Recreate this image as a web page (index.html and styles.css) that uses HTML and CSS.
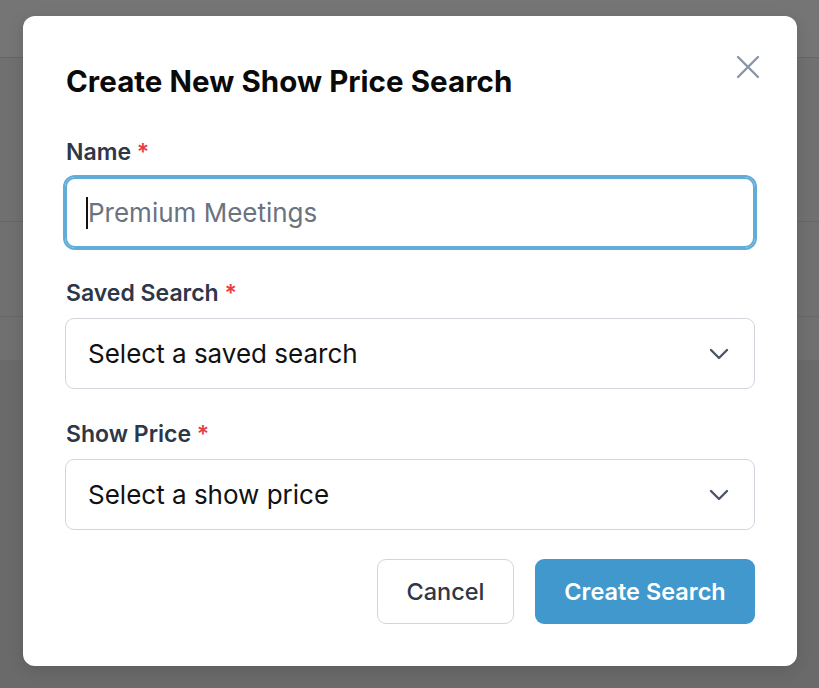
FILE: index.html
```html
<!DOCTYPE html>
<html lang="en">
<head>
<meta charset="utf-8">
<title>Create New Show Price Search</title>
<link rel="stylesheet" href="styles.css">
</head>
<body>
<div class="page">
  <div class="bg-header"></div>
  <div class="bg-row bg-row-1"></div>
  <div class="bg-row bg-row-2"></div>
  <div class="bg-row bg-row-3"></div>
  <div class="bg-rest"></div>
</div>
<div class="overlay">
  <div class="modal">
    <button class="close" aria-label="Close">
      <svg width="24" height="24" viewBox="0 0 24 24" fill="none" stroke="currentColor" stroke-width="2.4" stroke-linecap="round"><path d="M2 2 L22 22 M22 2 L2 22"/></svg>
    </button>
    <h2 class="title">Create New Show Price Search</h2>
    <div class="field">
      <label class="label">Name <span class="req">*</span></label>
      <div class="input focused"><span class="caret"></span><span class="placeholder">Premium Meetings</span></div>
    </div>
    <div class="field">
      <label class="label">Saved Search <span class="req">*</span></label>
      <div class="input select"><span class="value">Select a saved search</span>
        <svg class="chev" width="20" height="12" viewBox="0 0 20 12" fill="none" stroke="currentColor" stroke-width="2.4" stroke-linecap="round" stroke-linejoin="round"><path d="M2 2 L10 10 L18 2"/></svg>
      </div>
    </div>
    <div class="field field-last">
      <label class="label">Show Price <span class="req">*</span></label>
      <div class="input select"><span class="value">Select a show price</span>
        <svg class="chev" width="20" height="12" viewBox="0 0 20 12" fill="none" stroke="currentColor" stroke-width="2.4" stroke-linecap="round" stroke-linejoin="round"><path d="M2 2 L10 10 L18 2"/></svg>
      </div>
    </div>
    <div class="actions">
      <button class="btn btn-cancel">Cancel</button>
      <button class="btn btn-primary">Create Search</button>
    </div>
  </div>
</div>
</body>
</html>
```
FILE: styles.css
```css
* { box-sizing: border-box; }
html, body { margin: 0; padding: 0; }
body {
  width: 819px;
  height: 688px;
  overflow: hidden;
  font-family: Inter, "Noto Sans", "Liberation Sans", sans-serif;
  background: #6b6b6b;
  position: relative;
}
.page { display: flex; flex-direction: column; height: 688px; }
.bg-header { height: 58px; background: #757575; border-bottom: 1px solid #666; }
.bg-row { background: #707070; border-bottom: 1px solid #666; }
.bg-row-1 { height: 164px; }
.bg-row-2 { height: 95px; }
.bg-row-3 { height: 43px; border-bottom: none; }
.bg-rest { flex: 1; background: #6a6a6a; }

.overlay {
  position: absolute;
  inset: 0;
  padding: 16px 22px 0 23px;
}
.modal {
  position: relative;
  width: 774px;
  height: 650px;
  background: #fff;
  border-radius: 12px;
  padding: 48px 42px 42px 42px;
  box-shadow: 0 4px 16px rgba(0,0,0,0.12);
}
.close {
  position: absolute;
  top: 39px;
  right: 37px;
  width: 24px;
  height: 24px;
  padding: 0;
  border: none;
  background: none;
  color: #8b95a5;
  display: flex;
}
.title {
  margin: 0 0 41px 1px;
  font-size: 29.5px;
  font-weight: 700;
  color: #0a0a0a;
  line-height: 34px;
  letter-spacing: 0.05px;
}
.field { display: flex; flex-direction: column; margin-bottom: 32px; }
.field-last { margin-bottom: 29px; }
.label {
  font-size: 23px;
  font-weight: 600;
  color: #2d3748;
  line-height: 26px;
  margin: 0 0 12px 1px;
}
.req { color: #e53e3e; }
.input {
  height: 71px;
  border: 1.5px solid #d2d6dc;
  border-radius: 9px;
  display: flex;
  align-items: center;
  padding: 0 25px 0 22px;
  font-size: 26px;
}
.focused {
  border: 2px solid #62acd8;
  box-shadow: 0 0 0 2px #62acd8;
  border-radius: 10px;
  padding-left: 20px;
}
.caret {
  width: 2px;
  height: 32px;
  background: #111;
  margin-left: -1px;
}
.placeholder { color: #6b7280; }
.select { justify-content: space-between; }
.value { color: #111; }
.chev { color: #4a5568; }
.actions { display: flex; justify-content: flex-end; gap: 21px; }
.btn {
  height: 65px;
  border-radius: 9px;
  font-family: inherit;
  font-size: 23.5px;
  font-weight: 600;
  padding: 0;
}
.btn-cancel {
  width: 137px;
  background: #fff;
  border: 1.5px solid #d2d6dc;
  color: #2d3748;
  font-weight: 500;
}
.btn-primary {
  width: 220px;
  background: #4198cd;
  border: none;
  color: #fff;
}
```
